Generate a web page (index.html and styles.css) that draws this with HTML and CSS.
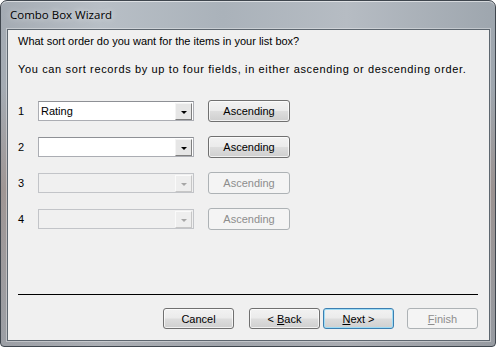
FILE: index.html
```html
<!DOCTYPE html>
<html lang="en">
<head>
    <meta charset="UTF-8">
    <title>Combo Box Wizard</title>
    <link rel="stylesheet" href="styles.css">
</head>
<body>
    <div class="window">
        <div class="titlebar">Combo Box Wizard</div>

        <div class="client">
            <p class="question">What sort order do you want for the items in your list box?</p>
            <p class="hint">You can sort records by up to four fields, in either ascending or descending order.</p>

            <div class="sort-rows">
                <div class="sort-row">
                    <span class="num">1</span>
                    <div class="combo"><span class="combo-text">Rating</span><span class="drop"></span></div>
                    <button class="btn btn-order">Ascending</button>
                </div>
                <div class="sort-row">
                    <span class="num">2</span>
                    <div class="combo"><span class="combo-text"></span><span class="drop"></span></div>
                    <button class="btn btn-order">Ascending</button>
                </div>
                <div class="sort-row disabled">
                    <span class="num">3</span>
                    <div class="combo"><span class="combo-text"></span><span class="drop"></span></div>
                    <button class="btn btn-order" disabled>Ascending</button>
                </div>
                <div class="sort-row disabled">
                    <span class="num">4</span>
                    <div class="combo"><span class="combo-text"></span><span class="drop"></span></div>
                    <button class="btn btn-order" disabled>Ascending</button>
                </div>
            </div>

            <hr class="separator">

            <div class="footer">
                <button class="btn btn-cancel">Cancel</button>
                <button class="btn btn-back">&lt; <u>B</u>ack</button>
                <button class="btn btn-next default"><u>N</u>ext &gt;</button>
                <button class="btn btn-finish" disabled><u>F</u>inish</button>
            </div>
        </div>
    </div>
</body>
</html>
```

FILE: styles.css
```css
html, body {
    margin: 0;
    padding: 0;
    background: #ffffff;
}

body {
    font-family: "Liberation Sans", Arial, sans-serif;
    font-size: 11px;
    color: #000;
}

.window {
    box-sizing: border-box;
    width: 496px;
    height: 347px;
    display: flex;
    flex-direction: column;
    padding: 0 5px 5px 6px;
    border: 1px solid #3f464e;
    border-radius: 7px 7px 4px 4px;
    background:
        linear-gradient(to bottom, rgba(150, 110, 90, 0) 25%, rgba(150, 110, 90, 0.35) 55%, rgba(120, 110, 110, 0.2) 100%),
        linear-gradient(to right, #a4abb3 0%, #b8bfc6 20%, #aab2ba 45%, #b6bcc3 70%, #9ea6ae 100%);
    box-shadow: inset 0 1px 0 rgba(255, 255, 255, 0.55);
}

.titlebar {
    height: 28px;
    line-height: 28px;
    padding-left: 3px;
    font-family: "Open Sans", "Noto Sans", sans-serif;
    font-size: 11.5px;
    color: #000;
    text-shadow: 0 0 6px rgba(255, 255, 255, 0.8);
}

.client {
    flex: 1;
    display: flex;
    flex-direction: column;
    border: 1px solid #5d666f;
    background-color: #f0f0f0;
    padding: 5px 11px 11px 10px;
    box-shadow: 0 0 0 1px rgba(255, 255, 255, 0.35);
}

.question, .hint {
    margin: 0;
    line-height: 13px;
}

.hint {
    margin-top: 15px;
    letter-spacing: 0.64px;
}

.sort-rows {
    display: flex;
    flex-direction: column;
    gap: 14px;
    margin-top: 24px;
}

.sort-row {
    display: flex;
    align-items: center;
    height: 22px;
}

.num {
    width: 20px;
}

.combo {
    box-sizing: border-box;
    width: 156px;
    height: 20px;
    display: flex;
    border: 1px solid #abadb3;
    border-top-color: #8e9095;
    background: #fff;
}

.combo-text {
    flex: 1;
    padding-left: 2px;
    line-height: 18px;
}

.drop {
    box-sizing: border-box;
    width: 17px;
    margin: 1px 1px 0 0;
    height: 17px;
    border: 1px solid;
    border-color: #f4f4f4 #7f7f7f #7f7f7f #f4f4f4;
    background: #e6e6e6;
    display: flex;
    align-items: center;
    justify-content: center;
}

.drop::after {
    content: "";
    border-left: 3px solid transparent;
    border-right: 3px solid transparent;
    border-top: 3px solid #000;
    margin-top: 2px;
}

.sort-row.disabled .combo {
    border-color: #c2c4c8;
    background: #f0f0f0;
}

.sort-row.disabled .drop {
    border-color: #fafafa #c6c6c6 #c6c6c6 #fafafa;
    background: #eeeeee;
}

.sort-row.disabled .drop::after {
    border-top-color: #a6a6a6;
}

.btn {
    box-sizing: border-box;
    height: 22px;
    padding: 0;
    font-family: "Liberation Sans", Arial, sans-serif;
    font-size: 11px;
    color: #000;
    border: 1px solid #707070;
    border-radius: 3px;
    background: linear-gradient(to bottom, #f2f2f2 0%, #ebebeb 48%, #dddddd 52%, #cfcfcf 100%);
    box-shadow: inset 0 0 0 1px rgba(255, 255, 255, 0.7);
}

.btn:disabled {
    color: #8d8d8d;
    border-color: #adb2b5;
    background: #f4f4f4;
    box-shadow: none;
}

.btn-order {
    width: 82px;
    margin-left: 14px;
}

.separator {
    margin: auto 0 13px 0;
    border: 0;
    border-top: 1px solid #000;
    height: 0;
}

.footer {
    display: flex;
    justify-content: flex-end;
    align-items: center;
    padding-right: 0;
}

.footer .btn {
    width: 71px;
    height: 21px;
}

.btn-back {
    margin-left: 15px;
}

.btn-next {
    margin-left: 3px;
}

.btn-finish {
    margin-left: 13px;
}

.btn.default {
    border-color: #3c7fb1;
    box-shadow: inset 0 0 0 1px #9fdcf5;
}
```
